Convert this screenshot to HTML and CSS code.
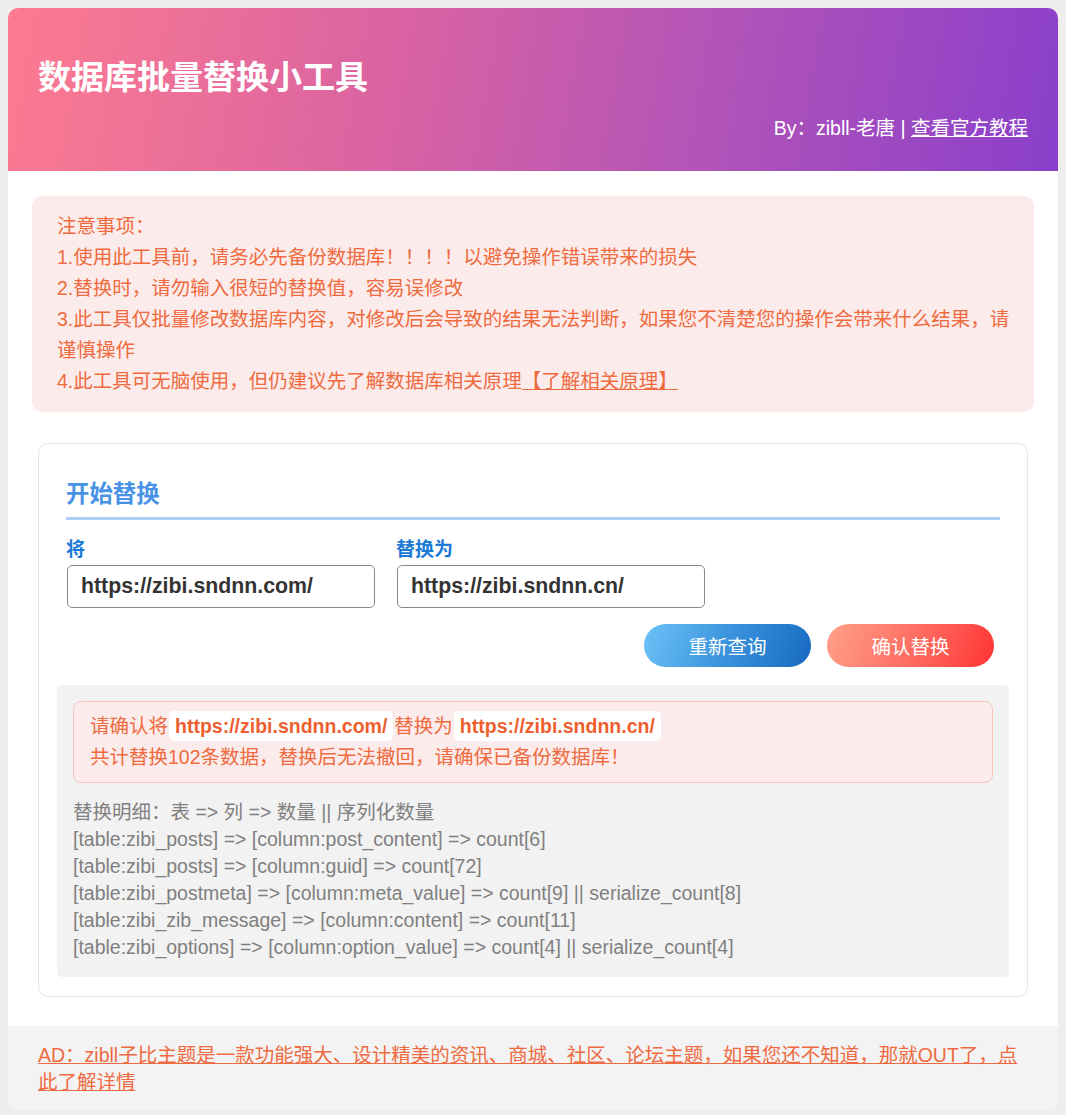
FILE: index.html
```html
<!DOCTYPE html>
<html lang="zh-CN">
<head>
<meta charset="utf-8">
<title>数据库批量替换小工具</title>
<link rel="stylesheet" href="styles.css">
</head>
<body>
<div class="page">
  <header class="hero">
    <h1 class="hero-title">数据库批量替换小工具</h1>
    <div class="byline">By：zibll-老唐 | <a href="#">查看官方教程</a></div>
  </header>
  <main class="body">
    <div class="notice">
      <div>注意事项：</div>
      <div>1.使用此工具前，请务必先备份数据库！！！！以避免操作错误带来的损失</div>
      <div>2.替换时，请勿输入很短的替换值，容易误修改</div>
      <div>3.此工具仅批量修改数据库内容，对修改后会导致的结果无法判断，如果您不清楚您的操作会带来什么结果，请谨慎操作</div>
      <div>4.此工具可无脑使用，但仍建议先了解数据库相关原理<a href="#">【了解相关原理】</a></div>
    </div>
    <section class="card">
      <h2 class="card-title">开始替换</h2>
      <div class="fields">
        <label class="field">
          <span class="field-label">将</span>
          <input class="field-input" type="text" value="https://zibi.sndnn.com/">
        </label>
        <label class="field">
          <span class="field-label">替换为</span>
          <input class="field-input" type="text" value="https://zibi.sndnn.cn/">
        </label>
      </div>
      <div class="actions">
        <button class="btn btn-blue" type="button">重新查询</button>
        <button class="btn btn-red" type="button">确认替换</button>
      </div>
      <div class="result">
        <div class="confirm">请确认将<span class="chip">https://zibi.sndnn.com/</span>替换为<span class="chip">https://zibi.sndnn.cn/</span><br>共计替换102条数据，替换后无法撤回，请确保已备份数据库！</div>
        <div class="details">
          <div>替换明细：表 =&gt; 列 =&gt; 数量 || 序列化数量</div>
          <div>[table:zibi_posts] =&gt; [column:post_content] =&gt; count[6]</div>
          <div>[table:zibi_posts] =&gt; [column:guid] =&gt; count[72]</div>
          <div>[table:zibi_postmeta] =&gt; [column:meta_value] =&gt; count[9] || serialize_count[8]</div>
          <div>[table:zibi_zib_message] =&gt; [column:content] =&gt; count[11]</div>
          <div>[table:zibi_options] =&gt; [column:option_value] =&gt; count[4] || serialize_count[4]</div>
        </div>
      </div>
    </section>
  </main>
  <footer class="foot">
    <a href="#">AD：zibll子比主题是一款功能强大、设计精美的资讯、商城、社区、论坛主题，如果您还不知道，那就OUT了，点此了解详情</a>
  </footer>
</div>
</body>
</html>
```

FILE: styles.css
```css
* { box-sizing: border-box; }

body {
  margin: 0;
  background: #efeded;
  font-family: "Liberation Sans", "Noto Sans CJK SC", sans-serif;
}

.page {
  margin: 8px 8px 5px;
  background: #ffffff;
  border-radius: 10px;
  overflow: hidden;
}

.hero {
  padding: 47px 30px 29px;
  color: #ffffff;
  background: linear-gradient(100deg, #fd7b90 0%, #d862a3 38%, #b455b7 65%, #8a3fcb 100%);
}

.hero-title {
  margin: 0;
  font-size: 33px;
  line-height: 46px;
  font-weight: 700;
}

.byline {
  margin-top: 13px;
  text-align: right;
  font-size: 19.5px;
  line-height: 28px;
}

.byline a {
  color: #ffffff;
  text-decoration: underline;
}

.body {
  padding: 25px 24px 29px;
}

.notice {
  background: #fbeceb;
  border-radius: 10px;
  padding: 15px 18px 15px 25px;
  color: #ef6a3e;
  font-size: 19.5px;
  line-height: 31px;
}

.notice a {
  color: inherit;
  text-decoration: underline;
}

.card {
  margin: 31px 6px 0;
  border: 1px solid #e6e6e6;
  border-radius: 10px;
  padding: 32px 18px 19px;
}

.card-title {
  margin: 0 9px;
  padding-bottom: 5px;
  border-bottom: 3px solid #afd0f4;
  color: #4892e6;
  font-size: 23.4px;
  line-height: 36px;
  font-weight: 700;
}

.fields {
  display: flex;
  gap: 22px;
  margin: 18px 9px 0;
}

.field {
  display: flex;
  flex-direction: column;
  gap: 3px;
  width: 308px;
}

.field-label {
  color: #1c79d6;
  font-size: 19px;
  line-height: 24px;
  font-weight: 700;
}

.field-input {
  width: 308px;
  height: 43px;
  margin-left: 1px;
  padding: 0 13px;
  border: 1px solid #8a8a8a;
  border-radius: 5px;
  background: #ffffff;
  color: #333333;
  font-family: "Liberation Sans", "Noto Sans CJK SC", sans-serif;
  font-size: 21.3px;
  font-weight: 700;
  outline: none;
}

.actions {
  display: flex;
  justify-content: flex-end;
  gap: 16px;
  margin: 16px 15px 0 0;
}

.btn {
  width: 167px;
  height: 43px;
  border: none;
  border-radius: 22px;
  color: #ffffff;
  font-family: "Liberation Sans", "Noto Sans CJK SC", sans-serif;
  font-size: 19.5px;
  cursor: pointer;
}

.btn-blue {
  background: linear-gradient(110deg, #6cc2f7 0%, #3a93dc 50%, #1769c0 100%);
}

.btn-red {
  background: linear-gradient(110deg, #ffa08a 0%, #ff6f63 50%, #ff3434 100%);
}

.result {
  margin-top: 18px;
  padding: 16px;
  background: #f2f2f2;
  border-radius: 5px;
}

.confirm {
  padding: 9px 16px;
  border: 1px solid #f6c4bb;
  border-radius: 8px;
  background: #fbeceb;
  color: #ef6a3e;
  font-size: 19.5px;
  line-height: 31px;
}

.chip {
  padding: 4px 6px;
  margin: 0 1px;
  border-radius: 5px;
  background: #ffffff;
  color: #ee5f30;
  font-weight: 700;
}

.details {
  margin-top: 16px;
  color: #808080;
  font-size: 19.5px;
  line-height: 27px;
}

.foot {
  padding: 16px 30px 14px;
  background: #f4f3f3;
  font-size: 19.5px;
  line-height: 27px;
}

.foot a {
  color: #ee6a40;
  text-decoration: underline;
}
```
